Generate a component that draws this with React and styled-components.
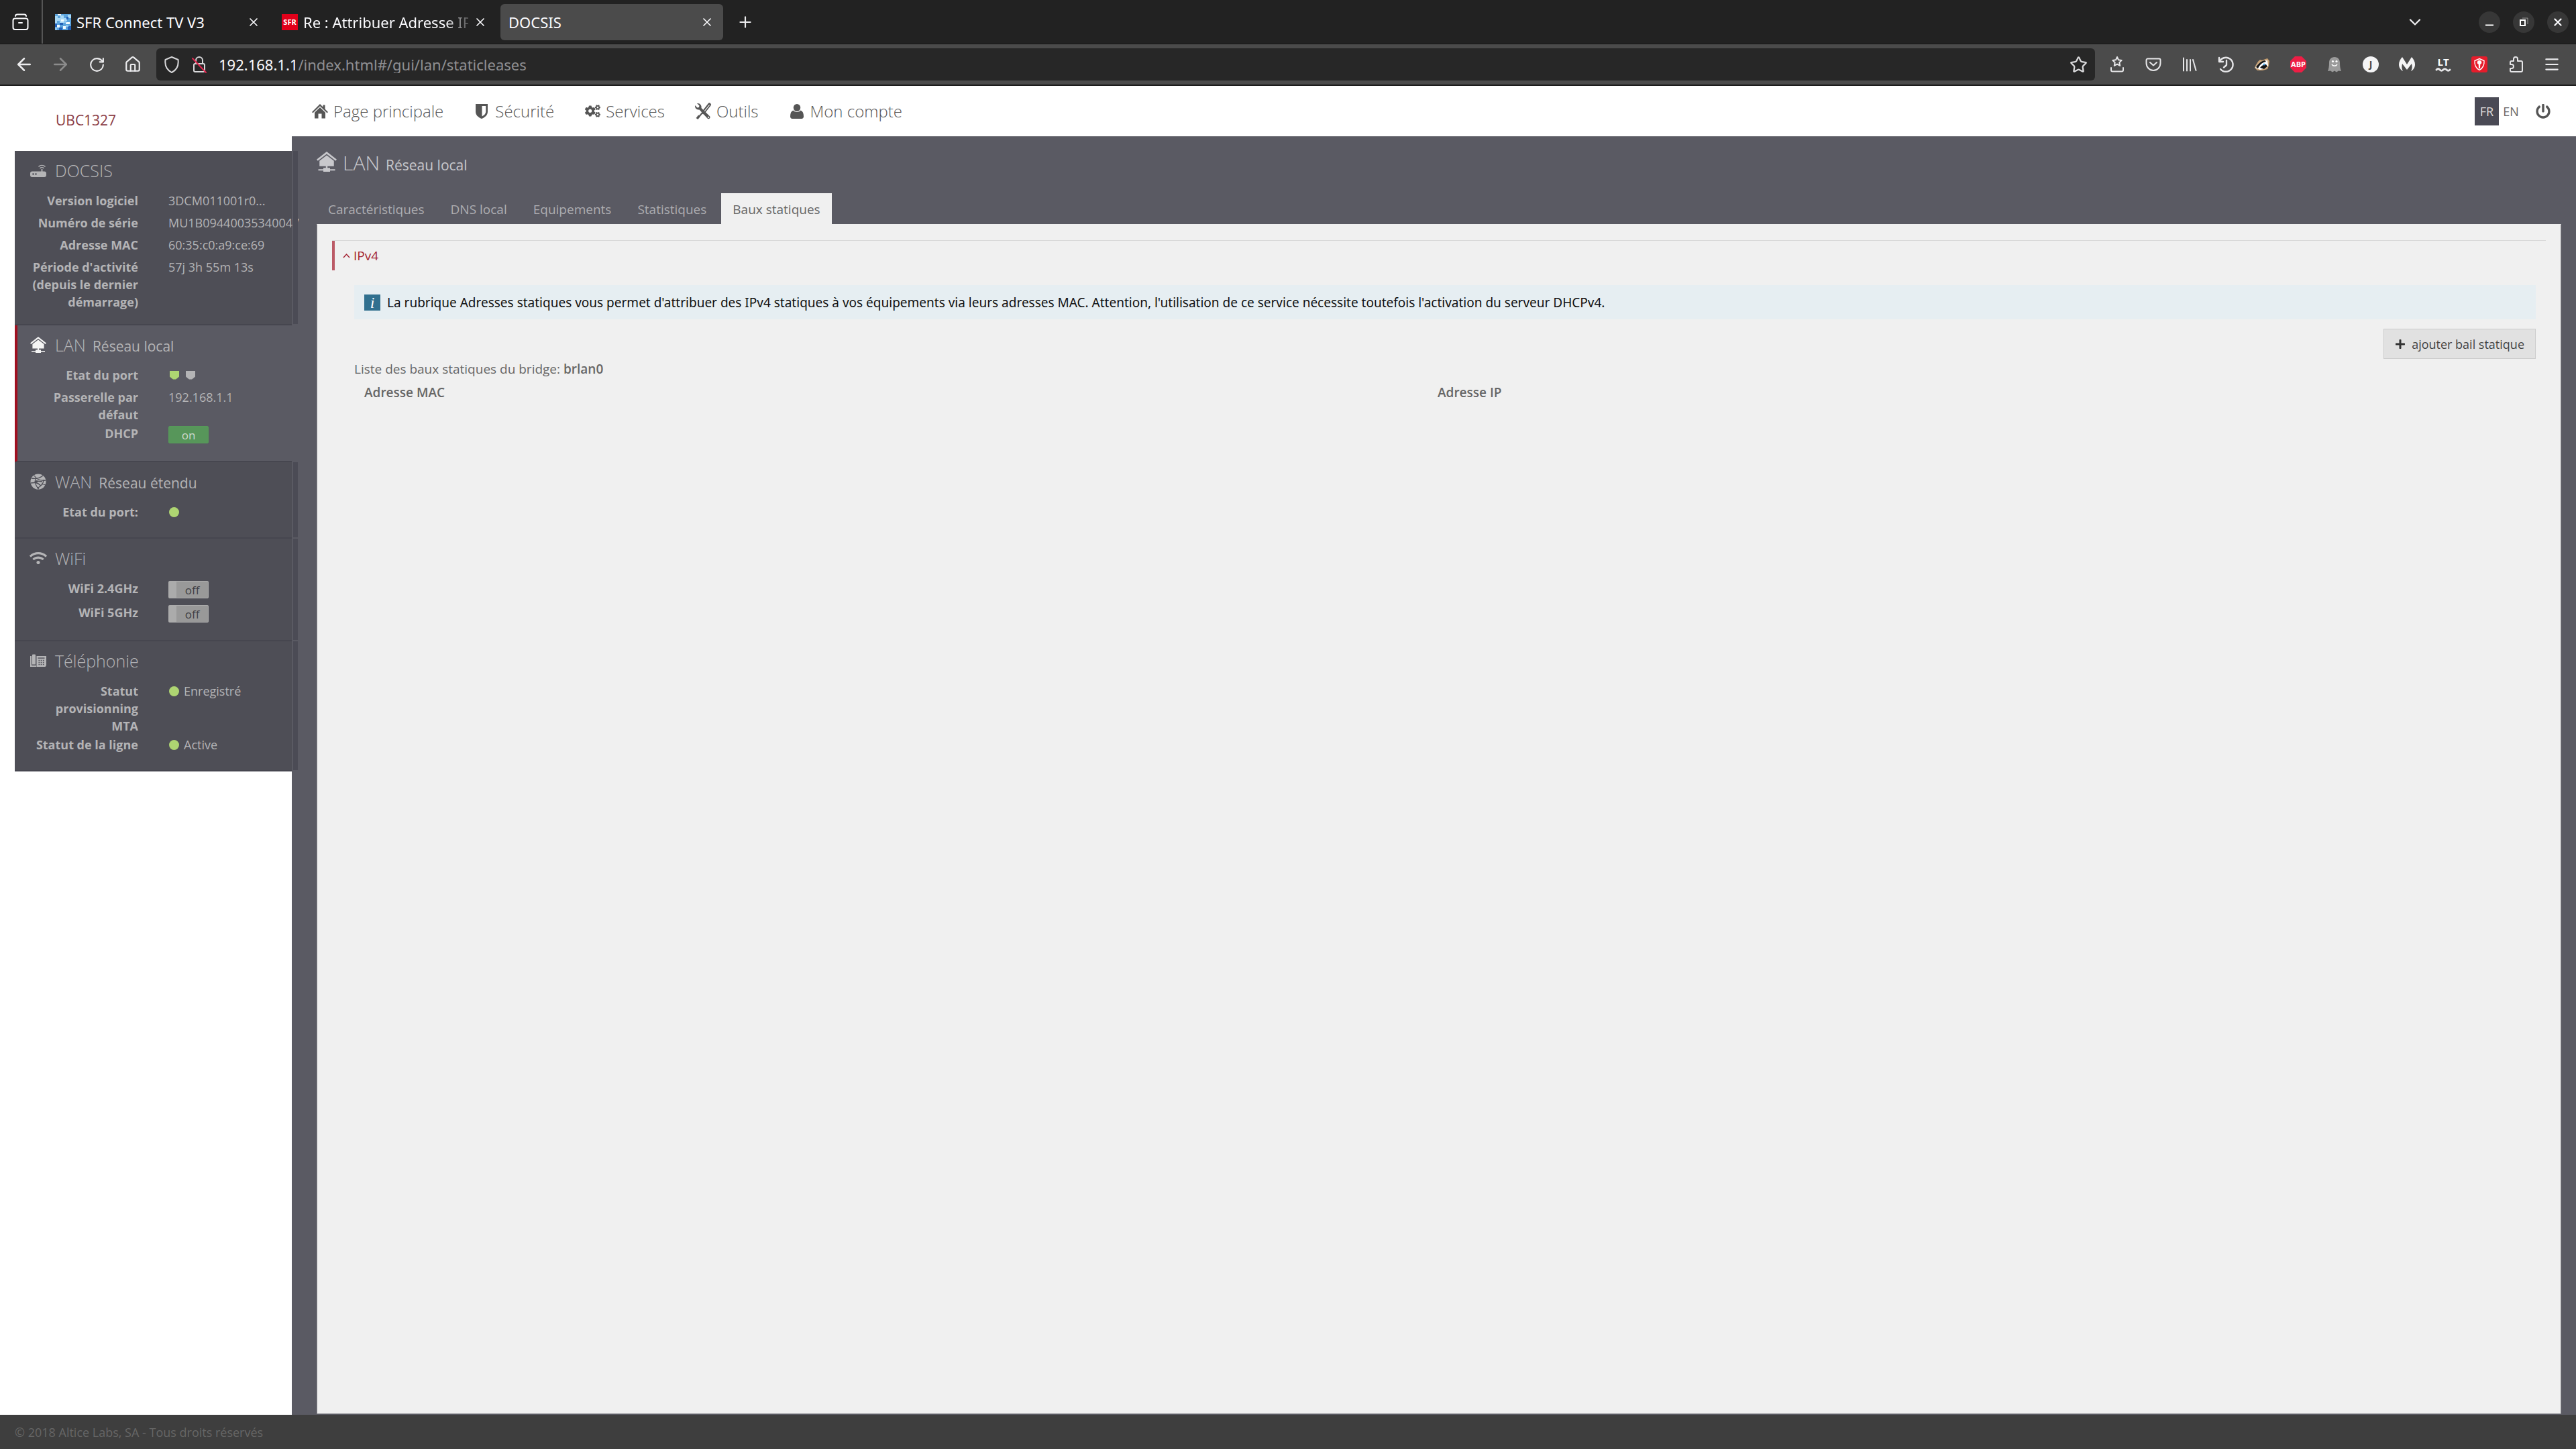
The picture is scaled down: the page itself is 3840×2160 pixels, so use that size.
import React, { useState } from "react";
import styled, { createGlobalStyle, css } from "styled-components";
import {
  ArrowLeft,
  ArrowRight,
  ChevronDown,
  House,
  Menu,
  Plus,
  RotateCw,
  Star,
  X,
} from "lucide-react";
import { FaCogs, FaPlus, FaPowerOff, FaWifi } from "react-icons/fa";

/* ---------- icons ---------- */

const IconText = styled.text`
  font-family: "Open Sans", sans-serif;
  font-size: ${({ $size }) => $size}px;
  font-weight: 700;
  text-anchor: middle;
  fill: ${({ $color }) => $color || "#fff"};
`;

const LanIcon = ({ size = 24 }) => (
  <svg width={size} height={size} viewBox="0 0 24 24" fill="currentColor">
    <path d="M12 0 L24 9.4 L22.6 11 L12 2.8 L1.4 11 L0 9.4 Z" />
    <path d="M12 4.4 L20.6 11 V17.4 H3.4 V11 Z" />
    <path d="M11 17 H13 V19.4 H16 V21 H22 V22.6 H16 V24 H8 V22.6 H2 V21 H8 V19.4 H11 Z" />
  </svg>
);

const RouterIcon = () => (
  <svg width="24" height="24" viewBox="0 0 24 24" fill="none" stroke="currentColor">
    <path
      d="M3 13.5H16.6V10H18.4V13.5H21a3 3 0 0 1 3 3V19a3 3 0 0 1-3 3H3a3 3 0 0 1-3-3v-2.5a3 3 0 0 1 3-3Z"
      fill="currentColor"
      stroke="none"
    />
    <path d="M12.5 6.5a7 7 0 0 1 10 0M14.5 9a4.4 4.4 0 0 1 6 0" strokeWidth="1.4" />
    <path d="M3.5 17.5h2M7.5 17.5h2" stroke="#4e4e56" strokeWidth="2.4" />
  </svg>
);

const GlobeIcon = () => (
  <svg width="24" height="24" viewBox="0 0 24 24" fill="none">
    <circle cx="12" cy="12" r="11.5" fill="currentColor" />
    <path
      d="M2 7c6 1 12 0 17-4M6 3c4 6 10 8 17 7M8 8c-2 5 0 10 5 15M20 9c0 6-4 10-10 13M1 14c6-1 10-1 15 4M9 11l9 1M23 17l-6-2"
      stroke="#4e4e56"
      strokeWidth="1.3"
    />
    <circle cx="9.5" cy="12" r="1.8" fill="#4e4e56" />
  </svg>
);

const PhoneIcon = () => (
  <svg width="24" height="20" viewBox="0 0 24 20" fill="none">
    <path d="M0 3h2v14h7v2H0zM3 1.5a1 1 0 0 1 1-1h3a1 1 0 0 1 1 1v14H3zM9.5 3H24v14l-1.5 2H9.5z" fill="currentColor" />
    <path d="M11.5 6h10" stroke="#4e4e56" strokeWidth="1.4" />
    <path d="M12.5 9.5h9M12.5 12.5h9M12.5 15.5h9" stroke="#4e4e56" strokeWidth="1.5" strokeDasharray="1.6 1.6" />
  </svg>
);

const HomeIcon = () => (
  <svg width="24" height="22" viewBox="0 0 24 22" fill="currentColor">
    <path d="M12 0 L16.5 4.4 V1.6 H19.5 V7.4 L24 12 L22.6 13.4 L12 3.2 L1.4 13.4 L0 12 Z" />
    <path d="M12 5 L20 12.7 V21.5 H14.5 V14.5 H9.5 V21.5 H4 V12.7 Z" />
  </svg>
);

const ShieldIcon = () => (
  <svg width="18" height="22" viewBox="0 0 18 22" fill="currentColor" fillRule="evenodd">
    <path d="M0 0H18V11.5C18 16.5 14 20 9 22C4 20 0 16.5 0 11.5ZM9.5 3V18.5C13 16.8 15.2 14.5 15.2 11.5V3Z" />
  </svg>
);

const ToolsIcon = () => (
  <svg width="24" height="24" viewBox="0 0 24 24" fill="none" stroke="currentColor">
    <path d="M21.5 2 L12.5 13.5" strokeWidth="5" strokeLinecap="round" />
    <path d="M21.5 2.5 L13.5 12.5" stroke="#fff" strokeWidth="1.2" />
    <path d="M12 13 L5 21" strokeWidth="2" />
    <path d="M6.5 18.5 L3 23" strokeWidth="3.6" />
    <path
      d="M3 0 L6.5 3.5 L6 6 L3.5 6.5 L0 3 C-.5 7 2.5 10 6.5 9.5 L18.5 22.6 C20.5 24.6 24 21.5 22 19.2 L9.5 7 C10.5 3 7 -.8 3 0Z"
      fill="currentColor"
      stroke="none"
    />
    <circle cx="20" cy="20.8" r="1.1" fill="#fff" stroke="none" />
  </svg>
);

const UserIcon = () => (
  <svg width="20" height="22" viewBox="0 0 20 22" fill="currentColor">
    <ellipse cx="10" cy="5.5" rx="5.2" ry="5.5" />
    <path d="M4.5 9.5C6 12.7 14 12.7 15.5 9.5C18.5 10.5 20 13.5 20 18.5C20 20.6 18.8 22 17 22H3C1.2 22 0 20.6 0 18.5C0 13.5 1.5 10.5 4.5 9.5Z" />
  </svg>
);

const PortIcon = () => (
  <svg width="14" height="13" viewBox="0 0 14 13" fill="currentColor">
    <path d="M0 0H14V8.5L11 11L9 12.5H5L3 11L0 8.5Z" />
  </svg>
);

const ViewIcon = () => (
  <svg width="26" height="26" viewBox="0 0 26 26" fill="none" stroke="#fbfbfe" strokeWidth="2" strokeLinecap="round">
    <path d="M5 4a3 2.6 0 0 1 3-2.5h10a3 2.6 0 0 1 3 2.5" />
    <rect x="1.5" y="7.5" width="22" height="16.5" rx="3" />
    <path d="M10 14h5" />
  </svg>
);

const LockIcon = () => (
  <svg width="24" height="26" viewBox="0 0 24 26" fill="none" stroke="#d8d8da" strokeWidth="2" strokeLinecap="round">
    <path d="M7 12V7a5 5 0 0 1 10 0v5" />
    <rect x="4" y="12" width="16" height="12" rx="2" />
    <path d="M2 4L22 25" stroke="#e22850" />
  </svg>
);

const UrlShield = () => (
  <svg width="24" height="26" viewBox="0 0 24 26" fill="none" stroke="#d8d8da" strokeWidth="2" strokeLinejoin="round">
    <path d="M12 2L21.5 6C22.5 14 20 21 12 25C4 21 1.5 14 2.5 6Z" />
  </svg>
);

const MosaicIcon = () => (
  <svg width="24" height="24" viewBox="0 0 24 24">
    <rect width="24" height="24" fill="#5ba3dc" />
    <path d="M0 3h4v3h4V2h5v4h6V1h5v5h-6v4h-5v3H7v-3H3v4H0z" fill="#a9d8f5" />
    <path d="M4 0h5v2H4zM9 8h4v3H9zM16 12h6v3h-6zM3 16h4v4H3zM12 18h4v4h-4z" fill="#f2fbff" />
    <path d="M0 14h3v5H0zM7 13h5v3H7zM17 4h3v4h-3zM19 18h5v6h-5zM6 20h5v4H6z" fill="#2360b8" />
    <path d="M13 10h4v3h-4zM16 16h4v3h-4zM0 20h3v4H0z" fill="#8cc4f0" />
  </svg>
);

const line = { fill: "none", stroke: "#e6e6e8", strokeWidth: 2, strokeLinecap: "round", strokeLinejoin: "round" };

const extensions = [
  {
    name: "Marque-pages",
    art: (
      <g {...line}>
        <path d="M12 1l2 4.3 4.7.6-3.4 3.3.9 4.7-4.2-2.3-4.2 2.3.9-4.7L5.3 5.9 10 5.3z" />
        <path d="M3 17v3.5a2 2 0 0 0 2 2h14a2 2 0 0 0 2-2V17" />
      </g>
    ),
  },
  {
    name: "Pocket",
    art: (
      <g {...line}>
        <path d="M3.5 3.5h17a2 2 0 0 1 2 2V10c0 6-4.5 11-10.5 11S1.5 16 1.5 10V5.5a2 2 0 0 1 2-2z" />
        <path d="M7 9l5 4.5L17 9" />
      </g>
    ),
  },
  {
    name: "Bibliothèque",
    art: (
      <g {...line}>
        <path d="M3 2.5v19M8 5v16.5M13 5v16.5M17 5l4.5 16" />
      </g>
    ),
  },
  {
    name: "Historique",
    art: (
      <g {...line} strokeWidth="2.4">
        <path d="M2 2v6h6M2.5 8a10.5 10.5 0 1 1 1.5 11" />
        <path d="M13 6v7l-4 3.5" />
      </g>
    ),
  },
  {
    name: "Privacy Badger",
    art: (
      <g>
        <path d="M1 17C3 12 6 7 9 5l3 1 5-2 3-1 3 4-1 7-2 5-7 2H5z" fill="#c9a274" />
        <path d="M2 17C6 10 12 6 20 6l1 8-4 4-8 2z" fill="#fff" />
        <path d="M3 16C6 11 11 7 16 6l2 2C12 9 8 13 6 18zM9 17c2-3 5-5 9-5l2 3-5 4z" fill="#151515" />
        <circle cx="15" cy="12" r="1.5" fill="#4aa3e0" />
      </g>
    ),
  },
  {
    name: "Adblock Plus",
    art: (
      <g>
        <path d="M7 0h10l7 7v10l-7 7H7l-7-7V7z" fill="#ed1e45" />
        <IconText x="12" y="16" $size={11}>ABP</IconText>
      </g>
    ),
  },
  {
    name: "Ghostery",
    art: (
      <g>
        <path d="M12 1c5 0 8 3.5 8 8.5 0 5 .5 9 2 12.5l-4-.5-3 2-3-2-3 2-3-2-4 .5c1.5-3.5 2-7.5 2-12.5C4 4.5 7 1 12 1z" fill="#9b9b9b" />
        <circle cx="9.5" cy="7.5" r="1.6" fill="#fff" />
        <circle cx="15" cy="7.5" r="1.6" fill="#fff" />
        <path d="M8 12c2 3 6 3 8 0" fill="none" stroke="#fff" strokeWidth="1.5" />
      </g>
    ),
  },
  {
    name: "JDownloader",
    art: (
      <g>
        <circle cx="12" cy="12" r="12" fill="#f5f5f6" />
        <IconText x="12" y="17" $size={14} $color="#444">J</IconText>
      </g>
    ),
  },
  {
    name: "Malwarebytes",
    art: (
      <path d="M5 1l7 11 7-11c3 3 5 7 5 11 0 4-2 8-6 10 2-3 2-7 1-11l-7 9-7-9c-1 4-1 8 1 11-4-2-6-6-6-10C0 8 2 4 5 1z" fill="#f5f5f6" />
    ),
  },
  {
    name: "LanguageTool",
    art: (
      <g {...line} strokeWidth="3">
        <IconText x="12" y="14" $size={15} stroke="none">LT</IconText>
        <path d="M2 20c2-2 3-2 5 0s3 2 5 0 3-2 5 0 3 2 5 0" />
      </g>
    ),
  },
  {
    name: "Trend Micro",
    art: (
      <g>
        <rect width="24" height="24" rx="3" fill="#e61c2b" />
        <path d="M12 3.5l7 3c.5 6-1.5 11-7 14-5.5-3-7.5-8-7-14z" fill="none" stroke="#fff" strokeWidth="1.4" />
        <path d="M12 6a3 3 0 0 1 1.3 5.8L13 18h-2l-.3-6.2A3 3 0 0 1 12 6z" fill="#fff" />
      </g>
    ),
  },
  {
    name: "Extensions",
    art: (
      <g {...line}>
        <path d="M9 7V4a3 3 0 0 1 6 0v3h5a2 2 0 0 1 2 2v12a2 2 0 0 1-2 2H6a2 2 0 0 1-2-2v-3h2a3 3 0 0 0 0-6H4V9a2 2 0 0 1 2-2z" />
      </g>
    ),
  },
];

/* ---------- page data ---------- */

const navItems = [
  { label: "Page principale", icon: <HomeIcon /> },
  { label: "Sécurité", icon: <ShieldIcon /> },
  { label: "Services", icon: <FaCogs size={23} /> },
  { label: "Outils", icon: <ToolsIcon /> },
  { label: "Mon compte", icon: <UserIcon /> },
];

const tabs = ["Caractéristiques", "DNS local", "Equipements", "Statistiques", "Baux statiques"];

const sections = [
  {
    title: "DOCSIS",
    icon: <RouterIcon />,
    rows: [
      { label: "Version logiciel", value: "3DCM011001r0..." },
      { label: "Numéro de série", value: "MU1B09440035340047" },
      { label: "Adresse MAC", value: "60:35:c0:a9:ce:69" },
      { label: "Période d'activité (depuis le dernier démarrage)", value: "57j 3h 55m 13s" },
    ],
  },
  {
    title: "LAN",
    subtitle: "Réseau local",
    icon: <LanIcon />,
    active: true,
    rows: [
      { label: "Etat du port", ports: [true, false] },
      { label: "Passerelle par défaut", value: "192.168.1.1" },
      { label: "DHCP", toggle: true, on: true },
    ],
  },
  {
    title: "WAN",
    subtitle: "Réseau étendu",
    icon: <GlobeIcon />,
    rows: [{ label: "Etat du port:", led: true }],
  },
  {
    title: "WiFi",
    icon: <FaWifi size={26} />,
    rows: [
      { label: "WiFi 2.4GHz", toggle: true, on: false },
      { label: "WiFi 5GHz", toggle: true, on: false },
    ],
  },
  {
    title: "Téléphonie",
    icon: <PhoneIcon />,
    rows: [
      { label: "Statut provisionning MTA", led: true, value: "Enregistré" },
      { label: "Statut de la ligne", led: true, value: "Active" },
    ],
  },
];

function Toggle({ label, initial }) {
  const [on, setOn] = useState(initial);
  return (
    <Switch $on={on}>
      <input type="checkbox" aria-label={label} checked={on} onChange={() => setOn(!on)} />
      <span>{on ? "on" : "off"}</span>
    </Switch>
  );
}

function Browser() {
  return (
    <>
      <TabStrip>
        <ViewButton aria-label="Firefox View">
          <ViewIcon />
        </ViewButton>
        <BrowserTab>
          <MosaicIcon />
          <TabTitle>SFR Connect TV V3</TabTitle>
          <TabClose aria-label="Fermer l'onglet"><X size={20} strokeWidth={2} /></TabClose>
        </BrowserTab>
        <BrowserTab>
          <SfrLogo>SFR</SfrLogo>
          <TabTitle $fade>Re : Attribuer Adresse IP f</TabTitle>
          <TabClose aria-label="Fermer l'onglet"><X size={20} strokeWidth={2} /></TabClose>
        </BrowserTab>
        <BrowserTab $active>
          <TabTitle>DOCSIS</TabTitle>
          <TabClose aria-label="Fermer l'onglet"><X size={20} strokeWidth={2} /></TabClose>
        </BrowserTab>
        <ToolButton aria-label="Nouvel onglet"><Plus size={26} strokeWidth={2} /></ToolButton>
        <Spacer />
        <ToolButton aria-label="Tous les onglets"><ChevronDown size={28} strokeWidth={2} /></ToolButton>
        <WindowButtons>
          <WindowButton aria-label="Réduire">
            <svg width="16" height="16"><path d="M2 12.5h12" stroke="#fff" strokeWidth="2" /></svg>
          </WindowButton>
          <WindowButton aria-label="Restaurer">
            <svg width="16" height="16" fill="none" strokeWidth="2">
              <path d="M3 5h7v8H3z" stroke="#fff" />
              <path d="M6 2h8v9" stroke="#999" strokeWidth="1" />
            </svg>
          </WindowButton>
          <WindowButton aria-label="Fermer"><X size={18} strokeWidth={3} /></WindowButton>
        </WindowButtons>
      </TabStrip>
      <Toolbar>
        <ToolButton aria-label="Précédent"><ArrowLeft size={30} strokeWidth={2} /></ToolButton>
        <ToolButton aria-label="Suivant" $dim><ArrowRight size={30} strokeWidth={2} /></ToolButton>
        <ToolButton aria-label="Actualiser"><RotateCw size={25} strokeWidth={2} /></ToolButton>
        <ToolButton aria-label="Accueil"><House size={26} strokeWidth={2} /></ToolButton>
        <UrlBar>
          <UrlShield />
          <LockIcon />
          <UrlField>
            <span>192.168.1.1</span>
            <input aria-label="Adresse" defaultValue="/index.html#/gui/lan/staticleases" />
          </UrlField>
          <Star size={27} strokeWidth={2} />
        </UrlBar>
        {extensions.map((ext) => (
          <ToolButton key={ext.name} aria-label={ext.name}>
            <svg width="24" height="24" viewBox="0 0 24 24">{ext.art}</svg>
          </ToolButton>
        ))}
        <ToolButton aria-label="Menu"><Menu size={26} strokeWidth={2} /></ToolButton>
      </Toolbar>
    </>
  );
}

function Sidebar() {
  return (
    <Side>
      {sections.map((section) => (
        <Section key={section.title} $active={section.active}>
          <SectionTitle>
            <IconSlot>{section.icon}</IconSlot>
            {section.title}
            {section.subtitle && <small>{section.subtitle}</small>}
          </SectionTitle>
          <dl>
            {section.rows.map((row) => (
              <InfoRow key={row.label} $tall={row.toggle}>
                <dt>{row.label}</dt>
                <dd>
                  {row.ports && row.ports.map((up, i) => <Port key={i} $up={up}><PortIcon /></Port>)}
                  {row.led && <Led />}
                  {row.toggle && <Toggle label={row.label} initial={row.on} />}
                  {row.value}
                </dd>
              </InfoRow>
            ))}
          </dl>
        </Section>
      ))}
    </Side>
  );
}

export default function App() {
  return (
    <Page>
      <GlobalStyle />
      <Browser />
      <Header>
        <Brand>UBC1327</Brand>
        <Nav>
          {navItems.map((item) => (
            <NavLink key={item.label} href="#">
              <IconSlot>{item.icon}</IconSlot>
              {item.label}
            </NavLink>
          ))}
        </Nav>
        <Lang $active>FR</Lang>
        <Lang>EN</Lang>
        <Power aria-label="Déconnexion"><FaPowerOff size={22} /></Power>
      </Header>
      <Body>
        <Sidebar />
        <Content>
          <Title>
            <LanIcon size={30} />
            LAN <small>Réseau local</small>
          </Title>
          <Tabs>
            {tabs.map((tab) => (
              <Tab key={tab} href="#" $active={tab === "Baux statiques"}>{tab}</Tab>
            ))}
          </Tabs>
          <Panel>
            <Group>
              <GroupTitle>
                <svg width="11" height="8" viewBox="0 0 11 8" fill="none" stroke="currentColor" strokeWidth="1.5">
                  <path d="M1 7L5.5 2L10 7" />
                </svg>
                IPv4
              </GroupTitle>
              <GroupBody>
                <Notice>
                  <InfoBadge>i</InfoBadge>
                  La rubrique Adresses statiques vous permet d'attribuer des IPv4 statiques à vos équipements via leurs
                  adresses MAC. Attention, l'utilisation de ce service nécessite toutefois l'activation du serveur DHCPv4.
                </Notice>
                <AddButton>
                  <FaPlus size={16} />
                  ajouter bail statique
                </AddButton>
                <Leases>
                  <caption>Liste des baux statiques du bridge: <b>brlan0</b></caption>
                  <thead>
                    <tr>
                      <th>Adresse MAC</th>
                      <th>Adresse IP</th>
                      <ActionHead />
                    </tr>
                  </thead>
                </Leases>
              </GroupBody>
            </Group>
          </Panel>
        </Content>
      </Body>
      <Footer>© 2018 Altice Labs, SA - Tous droits réservés</Footer>
    </Page>
  );
}

/* ---------- styles ---------- */

const GlobalStyle = createGlobalStyle`
  * {
    box-sizing: border-box;
  }
  body, h1, h2, dl, dd, p {
    margin: 0;
  }
  body {
    background: #fff;
    color: #666;
    font-family: "Open Sans", "Noto Sans", sans-serif;
    font-size: 18px;
    line-height: 26px;
  }
  button, input {
    font: inherit;
    color: inherit;
    border: 0;
    padding: 0;
    background: none;
  }
  a {
    color: inherit;
    text-decoration: none;
  }
  svg {
    flex: none;
    display: block;
    overflow: visible;
  }
`;

const Page = styled.div`
  display: flex;
  flex-direction: column;
  min-height: 100vh;
`;

const TabStrip = styled.div`
  display: flex;
  align-items: center;
  gap: 6px;
  height: 66px;
  background: #222;
  border-bottom: 1px solid #151515;
  color: #fbfbfe;
  font-family: "Noto Sans", sans-serif;
  font-size: 22px;
  line-height: 32px;
`;

const ViewButton = styled.button`
  display: flex;
  align-items: center;
  justify-content: center;
  align-self: stretch;
  width: 64px;
  border-right: 2px solid #555;
`;

const BrowserTab = styled.div`
  display: flex;
  align-items: center;
  width: 332px;
  height: 54px;
  padding: 0 14px 0 12px;
  gap: 8px;
  border-radius: 6px;
  background: ${({ $active }) => ($active ? "#4b4b4b" : "transparent")};
`;

const TabTitle = styled.span`
  flex: 1;
  white-space: nowrap;
  ${({ $fade }) => $fade && css`
    min-width: 0;
    mask-image: linear-gradient(to right, #000 212px, transparent 256px);
  `}
`;

const TabClose = styled.button`
  display: flex;
`;

const SfrLogo = styled.span`
  width: 24px;
  height: 24px;
  background: #e2001a;
  color: #fff;
  font-size: 11px;
  font-weight: 700;
  line-height: 24px;
  text-align: center;
`;

const Spacer = styled.div`
  flex: 1;
`;

const ToolButton = styled.button`
  display: flex;
  align-items: center;
  justify-content: center;
  width: 54px;
  height: 48px;
  flex: none;
  color: ${({ $dim }) => ($dim ? "#8c8c8c" : "#ececee")};
`;

const WindowButtons = styled.div`
  display: flex;
  gap: 19px;
  padding: 0 11px 0 62px;
`;

const WindowButton = styled.button`
  display: flex;
  align-items: center;
  justify-content: center;
  width: 32px;
  height: 32px;
  border-radius: 50%;
  background: #373737;
`;

const Toolbar = styled.div`
  display: flex;
  align-items: center;
  height: 62px;
  padding: 0 9px;
  background: #4b4b4b;
  border-bottom: 2px solid #1c1c1c;
`;

const UrlBar = styled.div`
  display: flex;
  align-items: center;
  flex: 1;
  gap: 17px;
  height: 48px;
  margin: 0 6px 0 8px;
  padding: 0 11px;
  border-radius: 6px;
  background: #272727;
  color: #dcdcde;
`;

const UrlField = styled.label`
  display: flex;
  flex: 1;
  color: #fbfbfe;
  font-family: "Noto Sans", sans-serif;
  font-size: 22px;

  input {
    flex: 1;
    color: #8f8f92;
    outline: none;
  }
`;

const Header = styled.header`
  display: flex;
  align-items: center;
  height: 75px;
  padding-right: 38px;
`;

const Brand = styled.div`
  width: 435px;
  padding: 26px 0 0 83px;
  color: #8a3c45;
  font-size: 21px;
`;

const Nav = styled.nav`
  display: flex;
  flex: 1;
  gap: 43px;
  padding-left: 28px;
`;

const IconSlot = styled.span`
  display: flex;
  align-items: center;
  justify-content: center;
  width: 28px;
  flex: none;
`;

const NavLink = styled.a`
  display: flex;
  align-items: center;
  gap: 6px;
  color: #555;
  font-size: 24px;
  font-weight: 300;
  line-height: 32px;
`;

const Lang = styled.button`
  width: 36px;
  height: 42px;
  color: ${({ $active }) => ($active ? "#ddd" : "#666")};
  background: ${({ $active }) => ($active ? "#4a4a55" : "none")};
`;

const Power = styled.button`
  display: flex;
  margin-left: 19px;
  color: #555;
`;

const Body = styled.div`
  display: flex;
  flex: 1;
`;

const Side = styled.aside`
  position: relative;
  width: 435px;
  padding: 22px 0 0 22px;
  flex: none;
  color: #b4b4b6;
`;

/* the narrow strip continues each closed section over the content edge */
const Section = styled.section`
  position: relative;
  padding: 12px 0 18px ${({ $active }) => ($active ? 17 : 21)}px;
  border-left: ${({ $active }) => ($active ? "4px solid #a01020" : "0")};
  border-bottom: 2px solid #46464f;
  background: ${({ $active }) => ($active ? "#5a5a63" : "#4e4e56")};

  &::after {
    content: "";
    display: ${({ $active }) => ($active ? "none" : "block")};
    position: absolute;
    top: 0;
    bottom: 0;
    left: 100%;
    width: 7px;
    margin-left: 2px;
    background: #4b4b55;
  }

  ${IconSlot} {
    color: ${({ $active }) => ($active ? "#f4f4f4" : "#b4b4b6")};
  }
`;

const SectionTitle = styled.h2`
  display: flex;
  align-items: baseline;
  margin-bottom: 15px;
  font-size: 25px;
  font-weight: 300;
  line-height: 34px;

  ${IconSlot} {
    align-self: center;
    margin-right: 11px;
  }
  small {
    margin-left: 10px;
    font-size: 21px;
    font-weight: 400;
    line-height: 20px;
  }
`;

const InfoRow = styled.div`
  display: flex;
  gap: 45px;
  min-height: ${({ $tall }) => ($tall ? 36 : 33)}px;

  dt {
    width: 163px;
    padding-bottom: 2px;
    flex: none;
    font-weight: 700;
    text-align: right;
  }
  dd {
    display: flex;
    align-items: center;
    height: 26px;
    white-space: nowrap;
  }
`;

const Port = styled.span`
  padding: 0 8px 0 2px;
  color: ${({ $up }) => ($up ? "#aed572" : "#b4b4b6")};
`;

const Led = styled.span`
  width: 15px;
  height: 15px;
  margin: 0 7px 0 1px;
  border-radius: 50%;
  background: #aed572;
`;

const Switch = styled.label`
  display: flex;
  position: relative;
  width: 60px;
  height: 26px;
  margin-top: 4px;
  border: 1px solid ${({ $on }) => ($on ? "#559a59" : "#ababab")};
  border-left-width: ${({ $on }) => ($on ? 1 : 12)}px;
  border-radius: 2px;
  background: ${({ $on }) => ($on ? "#57965a" : "#999")};
  color: ${({ $on }) => ($on ? "#ccd8cc" : "#3e3e44")};
  font-size: 17px;
  line-height: 25px;

  input {
    position: absolute;
    inset: 0;
    margin: 0;
    opacity: 0;
  }
  span {
    flex: 1;
    text-align: center;
  }
`;

const Content = styled.main`
  display: flex;
  flex-direction: column;
  flex: 1;
  min-width: 0;
  padding: 20px 22px 1px 37px;
  background: #5a5a63;
  border-top: 1px solid #74747b;
`;

const Title = styled.h1`
  display: flex;
  align-items: baseline;
  gap: 9px;
  height: 64px;
  color: #c8c8cc;
  font-size: 30px;
  font-weight: 300;
  line-height: 38px;

  svg {
    margin-top: 2px;
    align-self: flex-start;
  }
  small {
    font-size: 21px;
    font-weight: 400;
  }
`;

const Tabs = styled.nav`
  display: flex;
  gap: 5px;
  font-size: 19px;
`;

const Tab = styled.a`
  padding: 11px 17px 9px;
  color: ${({ $active }) => ($active ? "#666" : "#adadb1")};
  background: ${({ $active }) => ($active ? "#f0f0f0" : "none")};
`;

const Panel = styled.div`
  flex: 1;
  padding: 23px 22px 0;
  border: 1px solid #8a8a8f;
  border-top-color: #f0f0f0;
  background: #f0f0f0;
  font-size: 19px;
`;

const Group = styled.section`
  border-top: 1px solid #d9d9d9;
`;

const GroupTitle = styled.h2`
  display: flex;
  align-items: center;
  gap: 5px;
  height: 44px;
  padding-left: 12px;
  border-left: 4px solid #bb5a66;
  color: #a31f2f;
  font-size: 19px;
  font-weight: 400;
`;

const GroupBody = styled.div`
  display: flex;
  flex-direction: column;
  padding: 22px 15px 0 33px;
`;

const Notice = styled.p`
  display: flex;
  align-items: center;
  gap: 10px;
  min-height: 51px;
  padding: 0 15px;
  background: #e6eef2;
  color: #111;
  font-family: "Noto Sans", sans-serif;
`;

const InfoBadge = styled.span`
  width: 24px;
  height: 24px;
  background: #31708f;
  color: #fff;
  font-family: "Liberation Serif", serif;
  font-size: 24px;
  font-style: italic;
  line-height: 24px;
  text-align: center;
`;

const AddButton = styled.button`
  display: flex;
  align-items: center;
  align-self: flex-end;
  gap: 9px;
  height: 45px;
  margin-top: 14px;
  padding: 0 16px;
  border: 1px solid #ccc;
  background: #e1e1e1;
  color: #444;
  font-size: 18px;

  svg {
    color: #333;
  }
`;

const Leases = styled.table`
  width: 100%;
  margin-top: 2px;
  border-collapse: collapse;
  table-layout: fixed;

  caption {
    padding-bottom: 9px;
    text-align: left;
  }
  b {
    font-weight: 600;
  }
  th {
    padding: 0 15px;
    font-weight: 600;
    text-align: left;
  }
`;

const ActionHead = styled.td`
  width: 52px;
`;

const Footer = styled.footer`
  height: 51px;
  padding: 13px 22px;
  background: #3e3e3e;
  color: #666;
`;
